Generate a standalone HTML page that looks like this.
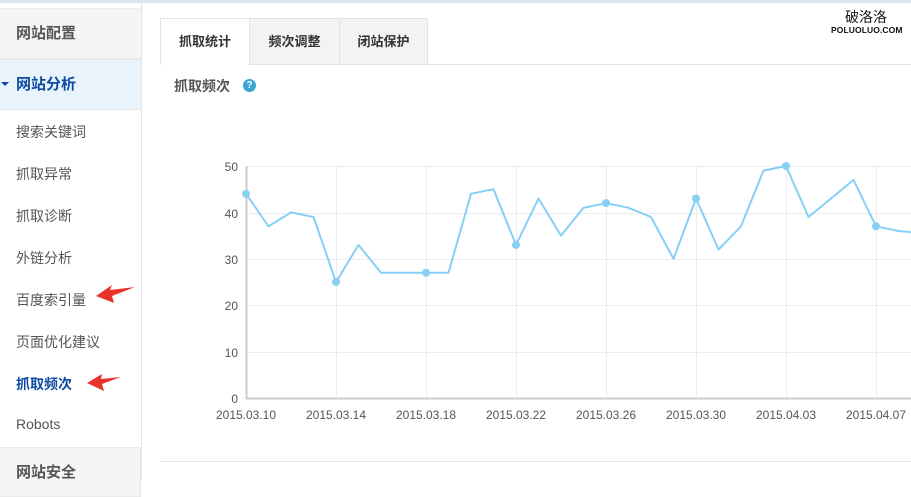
<!DOCTYPE html>
<html><head><meta charset="utf-8"><style>
*{margin:0;padding:0;box-sizing:border-box}
body{width:911px;height:479px;overflow:hidden;background:#fff;font-family:"Liberation Sans","Noto Sans CJK SC",sans-serif;position:relative}
.a{position:absolute}
.top{left:0;top:0;width:911px;height:3px;background:#dfe5ee}
.side{left:0;top:3px;width:142px;height:476px;border-right:1px solid #e5e5e5;background:#fff}
.sec{left:0;width:141px;height:51px;background:#f5f5f5;border-top:1px solid #ebebeb;border-bottom:1px solid #ebebeb;font-size:15px;font-weight:bold;color:#555;padding-left:16px;line-height:49px}
.item{left:16px;font-size:14px;color:#555}
.tab{top:18px;height:47px;border:1px solid #e3e3e3;background:#f3f3f3;font-size:13px;font-weight:bold;color:#333;text-align:center;line-height:46px}
</style></head><body>
<div class="a top"></div>
<div class="a side"></div>
<div class="a sec" style="top:8px">网站配置</div>
<div class="a sec" style="top:59px;background:#e9f3fc;color:#0d4aa1;border-color:#dde8f3">网站分析</div>
<div class="a" style="left:1px;top:82px;width:0;height:0;border-left:4px solid transparent;border-right:4px solid transparent;border-top:4px solid #0d4aa1"></div>
<div class="a item" style="top:122px">搜索关键词</div>
<div class="a item" style="top:164px">抓取异常</div>
<div class="a item" style="top:206px">抓取诊断</div>
<div class="a item" style="top:248px">外链分析</div>
<div class="a item" style="top:290px">百度索引量</div>
<div class="a item" style="top:332px">页面优化建议</div>
<div class="a item" style="top:374px;color:#0d4aa1;font-weight:bold">抓取频次</div>
<div class="a item" style="top:416px">Robots</div>
<div class="a sec" style="top:447px;height:50px;border-right:1px solid #e5e5e5">网站安全</div>
<svg class="a" style="left:0;top:0" width="150" height="479">
<polygon points="96,296 112,285 110,290 135,287 112,296 114,303" fill="#e8332b"/>
<polygon points="87,383 102,374 101,379 121,377 102,384 104,391" fill="#e8332b"/>
</svg>
<div class="a" style="left:160px;top:64px;width:751px;height:1px;background:#e3e3e3"></div>
<div class="a tab" style="left:160px;width:90px;background:#fff;border-bottom-color:#fff">抓取统计</div>
<div class="a tab" style="left:249px;width:91px">频次调整</div>
<div class="a tab" style="left:339px;width:89px">闭站保护</div>
<div class="a" style="left:174px;top:76px;font-size:14px;font-weight:bold;color:#555">抓取频次</div>
<div class="a" style="left:243px;top:79px;width:13px;height:13px;border-radius:50%;background:#3aa5d2;color:#fff;font-size:10px;font-weight:bold;text-align:center;line-height:13px">?</div>
<div class="a" style="left:845px;top:7px;font-size:14px;color:#111">破洛洛</div>
<div class="a" style="left:831px;top:25px;font-size:8.5px;font-weight:bold;color:#111;letter-spacing:0.1px">POLUOLUO.COM</div>
<div class="a" style="left:160px;top:461px;width:751px;height:1px;background:#e3e3e3"></div>
<svg class="a" style="left:0;top:0" width="911" height="479" font-family="Liberation Sans,sans-serif" font-size="12" fill="#555">
<g stroke="#ececec" stroke-width="1">
<line x1="246" y1="166.5" x2="911" y2="166.5"/><line x1="246" y1="213.5" x2="911" y2="213.5"/><line x1="246" y1="259.5" x2="911" y2="259.5"/><line x1="246" y1="305.5" x2="911" y2="305.5"/><line x1="246" y1="352.5" x2="911" y2="352.5"/>
<line x1="336.5" y1="166" x2="336.5" y2="398"/><line x1="426.5" y1="166" x2="426.5" y2="398"/><line x1="516.5" y1="166" x2="516.5" y2="398"/><line x1="606.5" y1="166" x2="606.5" y2="398"/><line x1="696.5" y1="166" x2="696.5" y2="398"/><line x1="786.5" y1="166" x2="786.5" y2="398"/><line x1="876.5" y1="166" x2="876.5" y2="398"/>
</g>
<line x1="246.5" y1="166" x2="246.5" y2="399" stroke="#ccc" stroke-width="2"/>
<line x1="246" y1="398.5" x2="911" y2="398.5" stroke="#ccc" stroke-width="2"/>
<g text-anchor="end"><text x="238" y="171">50</text><text x="238" y="218">40</text><text x="238" y="264">30</text><text x="238" y="310">20</text><text x="238" y="357">10</text><text x="238" y="403">0</text></g>
<g text-anchor="middle"><text x="246" y="419">2015.03.10</text><text x="336" y="419">2015.03.14</text><text x="426" y="419">2015.03.18</text><text x="516" y="419">2015.03.22</text><text x="606" y="419">2015.03.26</text><text x="696" y="419">2015.03.30</text><text x="786" y="419">2015.04.03</text><text x="876" y="419">2015.04.07</text></g>
<polyline fill="none" stroke="#86d0f5" stroke-width="2" stroke-linejoin="round" points="246,193.8 268.5,226.3 291,212.4 313.5,217 336,282 358.5,244.9 381,272.7 403.5,272.7 426,272.7 448.5,272.7 471,193.8 493.5,189.2 516,244.9 538.5,198.5 561,235.6 583.5,207.8 606,203.1 628.5,207.8 651,217 673.5,258.8 696,198.5 718.5,249.5 741,226.3 763.5,170.6 786,166 808.5,217 831,198.5 853.5,179.9 876,226.3 898.5,231 921,233"/>
<g fill="#86d0f5"><circle cx="246" cy="193.8" r="4"/><circle cx="336" cy="282" r="4"/><circle cx="426" cy="272.7" r="4"/><circle cx="516" cy="244.9" r="4"/><circle cx="606" cy="203.1" r="4"/><circle cx="696" cy="198.5" r="4"/><circle cx="786" cy="166" r="4"/><circle cx="876" cy="226.3" r="4"/></g>
</svg>
</body></html>
